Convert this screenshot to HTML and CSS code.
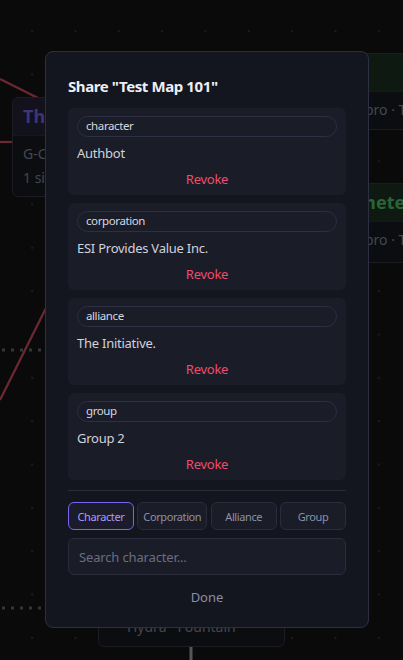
FILE: index.html
```html
<!DOCTYPE html>
<html lang="en">
<head>
<meta charset="utf-8">
<title>Share map</title>
<link rel="stylesheet" href="styles.css">
</head>
<body>
<div class="canvas">
  <svg class="edges" width="403" height="660" viewBox="0 0 403 660">
    <polyline points="0,79 40,99" class="edge"/>
    <polyline points="0,142 14,142" class="edge"/>
    <polyline points="0,400 60,280" class="edge"/>
    <line x1="2" y1="350" x2="46" y2="350" class="dots"/>
    <line x1="2" y1="608" x2="46" y2="608" class="dots"/>
    <line x1="191" y1="646" x2="191" y2="660" class="stem"/>
  </svg>

  <div class="node node-left">
    <div class="node-head purple">The Hub</div>
    <div class="node-body">
      <div>G-C00 · Hub</div>
      <div>1 signature</div>
    </div>
  </div>

  <div class="node node-r1">
    <div class="node-head green"></div>
    <div class="node-body"><div>pro · Tag</div></div>
  </div>

  <div class="node node-r2">
    <div class="node-head green">Perimeter</div>
    <div class="node-body"><div>pro · Tag</div></div>
  </div>

  <div class="node node-bottom">
    <div class="node-body"><div>Hydra · Fountain</div></div>
  </div>
</div>

<div class="modal" role="dialog">
  <h2 class="title">Share "Test Map 101"</h2>

  <div class="shares">
    <div class="share">
      <span class="pill">character</span>
      <div class="name">Authbot</div>
      <button class="revoke">Revoke</button>
    </div>
    <div class="share">
      <span class="pill">corporation</span>
      <div class="name">ESI Provides Value Inc.</div>
      <button class="revoke">Revoke</button>
    </div>
    <div class="share">
      <span class="pill">alliance</span>
      <div class="name">The Initiative.</div>
      <button class="revoke">Revoke</button>
    </div>
    <div class="share">
      <span class="pill">group</span>
      <div class="name">Group 2</div>
      <button class="revoke">Revoke</button>
    </div>
  </div>

  <div class="tabs">
    <button class="tab active">Character</button>
    <button class="tab">Corporation</button>
    <button class="tab">Alliance</button>
    <button class="tab">Group</button>
  </div>

  <input class="search" type="text" placeholder="Search character...">

  <button class="done">Done</button>
</div>
</body>
</html>
```

FILE: styles.css
```css
* { box-sizing: border-box; }

html, body {
  margin: 0;
  padding: 0;
  width: 403px;
  height: 660px;
  overflow: hidden;
}

body {
  background-color: #0a0a0b;
  background-image: radial-gradient(circle, #1c1d21 1px, transparent 1.3px);
  background-size: 43.33px 43.33px;
  background-position: 10.5px 9.5px;
  font-family: "Noto Sans", "Open Sans", sans-serif;
  color: #d3d5de;
  position: relative;
}

.canvas {
  position: absolute;
  inset: 0;
  overflow: hidden;
}

.edges {
  position: absolute;
  left: 0;
  top: 0;
}

.edge {
  fill: none;
  stroke: #6b2834;
  stroke-width: 2.2;
}

.dots {
  stroke: #34353d;
  stroke-width: 3;
  stroke-dasharray: 3 6;
}

.stem {
  stroke: #55565c;
  stroke-width: 3;
}

.node {
  position: absolute;
  background: #0c0d11;
  border: 1px solid #1b1c24;
  border-radius: 6px;
  overflow: hidden;
  font-size: 14px;
  color: #45474f;
  white-space: nowrap;
}

.node-head {
  height: 37px;
  line-height: 37px;
  padding: 0 10px;
  font-weight: 700;
  font-size: 18px;
}

.node-head.purple {
  background: #13121c;
  color: #3c3578;
}

.node-head.green {
  background: #0e1a11;
  color: #2a6436;
}

.node-body {
  padding: 6px 10px;
  line-height: 24px;
  border-top: 1px solid #17181f;
}

.node-left {
  left: 12px;
  top: 97px;
  width: 150px;
  height: 100px;
}

.node-r1 {
  left: 270px;
  top: 53px;
  width: 180px;
  height: 77px;
}

.node-r1 .node-body,
.node-r2 .node-body {
  padding-left: 94px;
}

.node-r2 {
  left: 270px;
  top: 183px;
  width: 180px;
  height: 80px;
}

.node-r2 .node-head {
  padding-left: 52px;
}

.node-bottom {
  left: 98px;
  top: 596px;
  width: 187px;
  height: 51px;
}

.node-bottom .node-body {
  border-top: 0;
  padding: 18px 28px;
}

/* Modal */
.modal {
  position: absolute;
  left: 45px;
  top: 51px;
  width: 324px;
  background: #14161f;
  border: 1px solid #2c2f42;
  border-radius: 8px;
  padding: 24px 22px 20px;
  display: flex;
  flex-direction: column;
}

.title {
  margin: 0 0 11px;
  font-size: 15px;
  letter-spacing: -0.4px;
  line-height: 21px;
  font-weight: 700;
  color: #eceef4;
}

.shares {
  display: flex;
  flex-direction: column;
  gap: 8px;
  padding-bottom: 10px;
  border-bottom: 1px solid #2a2c3b;
}

.share {
  background: #1a1c28;
  border-radius: 6px;
  padding: 8px 9px 6px;
  display: flex;
  flex-direction: column;
}

.pill {
  display: block;
  height: 21px;
  line-height: 18px;
  border: 1px solid #2d2f42;
  border-radius: 999px;
  padding: 0 8px;
  font-size: 11.5px;
  letter-spacing: -0.4px;
  color: #d6d8e2;
}

.name {
  margin-top: 6px;
  font-size: 13px;
  letter-spacing: -0.25px;
  line-height: 20px;
  color: #d0d2dc;
}

.revoke {
  margin-top: 6px;
  background: none;
  border: 0;
  padding: 0;
  font-family: inherit;
  font-size: 13px;
  letter-spacing: -0.25px;
  line-height: 20px;
  color: #ee4d6c;
  text-align: center;
}

.tabs {
  display: grid;
  grid-template-columns: 66fr 70fr 66fr 66fr;
  gap: 3.4px;
  margin-top: 11px;
}

.tab {
  min-width: 0;
  height: 28px;
  padding: 0 2px;
  background: #1a1c28;
  border: 1px solid #2a2c3c;
  border-radius: 6px;
  font-family: inherit;
  font-size: 11px;
  letter-spacing: -0.4px;
  color: #8c90a6;
  white-space: nowrap;
}

.tab.active {
  border-color: #7866ee;
  color: #a99df7;
  background: #1b1b2c;
}

.search {
  margin-top: 8px;
  height: 37px;
  width: 100%;
  background: #1a1c28;
  border: 1px solid #2a2c3c;
  border-radius: 6px;
  padding: 0 10px;
  font-family: inherit;
  font-size: 13px;
  letter-spacing: -0.15px;
  color: #d0d2dc;
  outline: none;
}

.search::placeholder {
  color: #6a6e80;
}

.done {
  margin-top: 12px;
  background: none;
  border: 0;
  padding: 0;
  font-family: inherit;
  font-size: 13px;
  line-height: 20px;
  color: #8a8ea4;
  text-align: center;
}
```
